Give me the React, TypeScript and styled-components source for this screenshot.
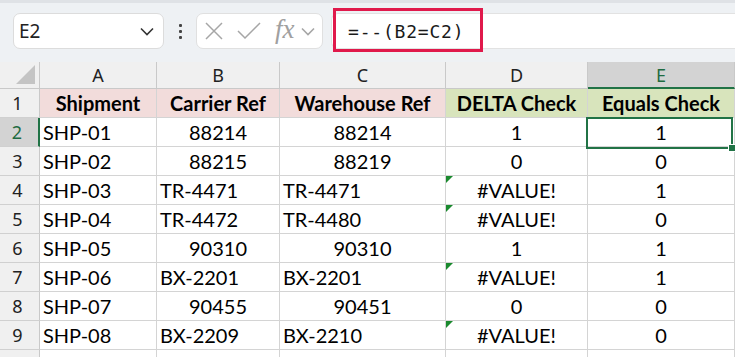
import { Fragment } from 'react'
import { createGlobalStyle, styled } from 'styled-components'

const GlobalStyle = createGlobalStyle`
  body {
    margin: 0;
    background: #eef1f4;
    overflow: hidden;
  }
`

const Page = styled.div`
  width: 735px;
  height: 357px;
  overflow: hidden;
  background: #eef1f4;
`

const TopStrip = styled.div`
  height: 3px;
  background: #dfe2e6;
`

const Toolbar = styled.div`
  display: flex;
  align-items: center;
  height: 36px;
  padding: 10px 0 13px 13px;
`

const NameBox = styled.div`
  width: 151px;
  height: 36px;
  box-sizing: border-box;
  display: flex;
  align-items: center;
  justify-content: space-between;
  padding: 0 9px 0 5px;
  background: #fff;
  border: 1px solid #dcdcdc;
  border-radius: 7px;
  font-family: 'Noto Sans', sans-serif;
  font-size: 19px;
  color: #222;
`

const Dots = styled.div`
  width: 32px;
  display: flex;
  flex-direction: column;
  align-items: center;
  gap: 3px;
  span {
    width: 3px;
    height: 3px;
    background: #444;
    border-radius: 1px;
  }
`

const FxBox = styled.div`
  width: 127px;
  height: 36px;
  box-sizing: border-box;
  display: flex;
  align-items: center;
  padding: 0 4px 0 8px;
  gap: 14px;
  background: #fff;
  border: 1px solid #e0e0e0;
  border-radius: 7px;
`

const FxText = styled.span`
  font-family: 'Liberation Serif', serif;
  font-style: italic;
  font-size: 27px;
  line-height: 1;
  color: #a0a0a0;
  display: flex;
  align-items: center;
  gap: 6px;
  margin-top: -3px;
  svg {
    margin-top: 4px;
  }
`

const FormulaBar = styled.div`
  margin-left: 8px;
  flex: 1;
  height: 36px;
  box-sizing: border-box;
  position: relative;
  display: flex;
  align-items: center;
  padding-left: 16px;
  background: #fff;
  border: 1px solid #e2e2e2;
  border-right: none;
  border-radius: 7px 0 0 7px;
  font-family: 'DejaVu Sans Mono', monospace;
  font-size: 18px;
  letter-spacing: 0.8px;
  color: #1a1a1a;
`

const Highlight = styled.div`
  position: absolute;
  left: 1px;
  top: -6px;
  width: 150px;
  height: 44px;
  box-sizing: border-box;
  border: 3px solid #e0194b;
`

const Sheet = styled.div`
  position: relative;
  display: grid;
  grid-template-columns: 40px 117px 123px 166px 142px 147px;
  grid-auto-rows: 29px;
  grid-template-rows: 27px;
  background: #fff;
`

const Corner = styled.div`
  position: relative;
  background: #f0f0f0;
  border-right: 1px solid #c9c9c9;
  border-bottom: 1px solid #c9c9c9;
  &::after {
    content: '';
    position: absolute;
    right: 4px;
    bottom: 4px;
    border-style: solid;
    border-width: 0 0 19px 19px;
    border-color: transparent transparent #c4c4c4 transparent;
  }
`

const ColHead = styled.div<{ $active?: boolean }>`
  display: flex;
  align-items: center;
  justify-content: center;
  background: ${(p) => (p.$active ? '#d3d3d3' : '#f0f0f0')};
  color: ${(p) => (p.$active ? '#1e6b41' : '#222')};
  border-right: 1px solid #c9c9c9;
  border-bottom: ${(p) => (p.$active ? '2px solid #217346' : '1px solid #c9c9c9')};
  font-family: 'Noto Sans', sans-serif;
  font-size: 18px;
  box-sizing: border-box;
`

const RowHead = styled.div<{ $active?: boolean }>`
  display: flex;
  align-items: center;
  justify-content: center;
  padding-right: 4px;
  background: ${(p) => (p.$active ? '#d3d3d3' : '#f0f0f0')};
  color: ${(p) => (p.$active ? '#1e6b41' : '#222')};
  border-right: ${(p) => (p.$active ? '2px solid #217346' : '1px solid #c9c9c9')};
  border-bottom: 1px solid #d0d0d0;
  font-family: 'Noto Sans', sans-serif;
  font-size: 18px;
  box-sizing: border-box;
`

const Cell = styled.div<{ $align?: 'left' | 'center'; $fill?: string; $bold?: boolean; $flag?: boolean }>`
  position: relative;
  display: flex;
  align-items: center;
  justify-content: ${(p) => (p.$align === 'center' ? 'center' : 'flex-start')};
  padding: 0 3px;
  background: ${(p) => p.$fill || '#fff'};
  border-right: 1px solid #d4d4d4;
  border-bottom: 1px solid #d4d4d4;
  font-family: Lato, 'Liberation Sans', sans-serif;
  font-size: 20px;
  font-weight: ${(p) => (p.$bold ? 700 : 400)};
  color: #000;
  box-sizing: border-box;
  white-space: nowrap;
  overflow: hidden;
  ${(p) =>
    p.$flag &&
    `&::before {
      content: '';
      position: absolute;
      left: 0;
      top: 0;
      border-style: solid;
      border-width: 7px 7px 0 0;
      border-color: #1a8a2e transparent transparent transparent;
    }`}
`

const Selection = styled.div`
  position: absolute;
  left: 586px;
  top: 55px;
  width: 147px;
  height: 32px;
  box-sizing: border-box;
  border: 2px solid #217346;
  pointer-events: none;
  &::after {
    content: '';
    position: absolute;
    right: -5px;
    bottom: -5px;
    width: 6px;
    height: 6px;
    background: #217346;
    border: 1px solid #fff;
  }
`

const Chevron = ({ color }: { color: string }) => (
  <svg width="14" height="9" viewBox="0 0 14 9">
    <path d="M1 1.5 L7 7.5 L13 1.5" fill="none" stroke={color} strokeWidth="1.6" />
  </svg>
)

type Row = {
  id: string
  carrier: string
  warehouse: string
  delta: string
  equals: string
}

const rows: Row[] = [
  { id: 'SHP-01', carrier: '88214', warehouse: '88214', delta: '1', equals: '1' },
  { id: 'SHP-02', carrier: '88215', warehouse: '88219', delta: '0', equals: '0' },
  { id: 'SHP-03', carrier: 'TR-4471', warehouse: 'TR-4471', delta: '#VALUE!', equals: '1' },
  { id: 'SHP-04', carrier: 'TR-4472', warehouse: 'TR-4480', delta: '#VALUE!', equals: '0' },
  { id: 'SHP-05', carrier: '90310', warehouse: '90310', delta: '1', equals: '1' },
  { id: 'SHP-06', carrier: 'BX-2201', warehouse: 'BX-2201', delta: '#VALUE!', equals: '1' },
  { id: 'SHP-07', carrier: '90455', warehouse: '90451', delta: '0', equals: '0' },
  { id: 'SHP-08', carrier: 'BX-2209', warehouse: 'BX-2210', delta: '#VALUE!', equals: '0' },
]

const isNum = (v: string) => /^\d+$/.test(v)

export default function App() {
  return (
    <Page>
      <GlobalStyle />
      <TopStrip />
      <Toolbar>
        <NameBox>
          <span>E2</span>
          <Chevron color="#333" />
        </NameBox>
        <Dots>
          <span />
          <span />
          <span />
        </Dots>
        <FxBox>
          <svg width="18" height="18" viewBox="0 0 18 18">
            <path d="M1 1 L17 17 M17 1 L1 17" stroke="#a6a6a6" strokeWidth="1.5" />
          </svg>
          <svg width="24" height="18" viewBox="0 0 24 18">
            <path d="M1 9 L8 16 L23 1" fill="none" stroke="#a6a6a6" strokeWidth="1.5" />
          </svg>
          <FxText>
            fx
            <Chevron color="#a6a6a6" />
          </FxText>
        </FxBox>
        <FormulaBar>
          =--(B2=C2)
          <Highlight />
        </FormulaBar>
      </Toolbar>
      <Sheet>
        <Corner />
        {['A', 'B', 'C', 'D', 'E'].map((c) => (
          <ColHead key={c} $active={c === 'E'}>
            {c}
          </ColHead>
        ))}
        <RowHead>1</RowHead>
        <Cell $align="center" $bold $fill="#f2dcdb">Shipment</Cell>
        <Cell $align="center" $bold $fill="#f2dcdb">Carrier Ref</Cell>
        <Cell $align="center" $bold $fill="#f2dcdb">Warehouse Ref</Cell>
        <Cell $align="center" $bold $fill="#d8e4bc">DELTA Check</Cell>
        <Cell $align="center" $bold $fill="#d8e4bc">Equals Check</Cell>
        {rows.map((r, i) => (
          <Fragment key={r.id}>
            <RowHead $active={i === 0}>{i + 2}</RowHead>
            <Cell>{r.id}</Cell>
            <Cell $align={isNum(r.carrier) ? 'center' : 'left'}>{r.carrier}</Cell>
            <Cell $align={isNum(r.warehouse) ? 'center' : 'left'}>{r.warehouse}</Cell>
            <Cell $align="center" $flag={!isNum(r.delta)}>
              {r.delta}
            </Cell>
            <Cell $align="center">{r.equals}</Cell>
          </Fragment>
        ))}
        <RowHead />
        <Cell />
        <Cell />
        <Cell />
        <Cell />
        <Cell />
        <Selection />
      </Sheet>
    </Page>
  )
}
